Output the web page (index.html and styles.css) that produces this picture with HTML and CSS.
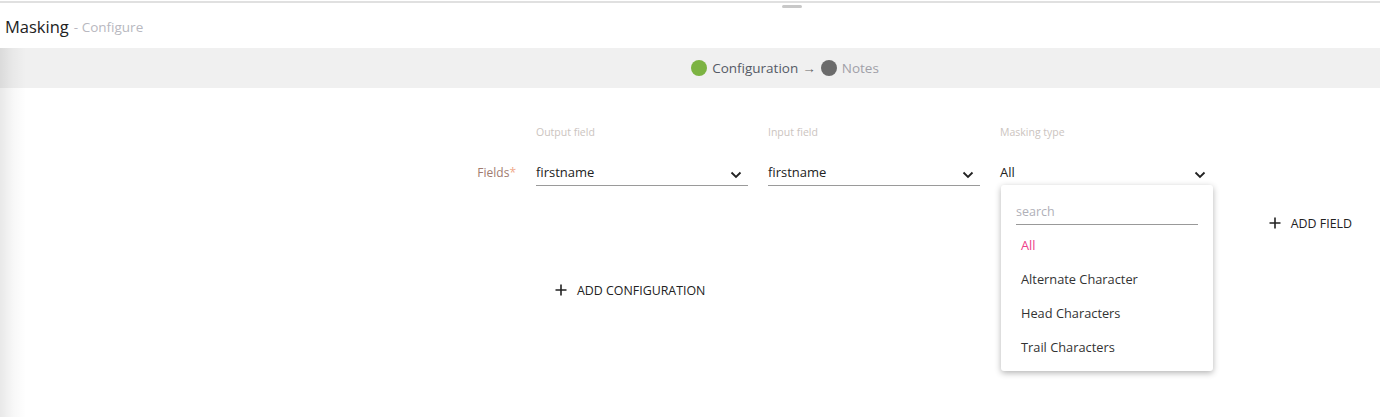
FILE: index.html
```html
<!DOCTYPE html>
<html>
<head>
<meta charset="utf-8">
<link rel="stylesheet" href="styles.css">
</head>
<body>
<div class="panel">
  <div class="topline"></div>
  <div class="handle"></div>
  <header class="title-bar">
    <span class="title">Masking</span>
    <span class="subtitle">- Configure</span>
  </header>
  <div class="stepper">
    <span class="dot dot-done"></span>
    <span class="step step-active">Configuration</span>
    <span class="arrow">→</span>
    <span class="dot dot-todo"></span>
    <span class="step step-todo">Notes</span>
  </div>
  <main class="form">
    <div class="grid">
      <div></div>
      <div class="col-head">Output field</div>
      <div class="col-head">Input field</div>
      <div class="col-head">Masking type</div>
      <div></div>

      <div class="row-label">Fields<span class="req">*</span></div>
      <div class="select"><span>firstname</span><svg class="chev" viewBox="0 0 12 8"><path d="M1.5 1.5 L6 6 L10.5 1.5" /></svg></div>
      <div class="select"><span>firstname</span><svg class="chev" viewBox="0 0 12 8"><path d="M1.5 1.5 L6 6 L10.5 1.5" /></svg></div>
      <div class="select select-open"><span>All</span><svg class="chev" viewBox="0 0 12 8"><path d="M1.5 1.5 L6 6 L10.5 1.5" /></svg>
        <div class="menu">
          <div class="search">search</div>
          <div class="opt opt-selected">All</div>
          <div class="opt">Alternate Character</div>
          <div class="opt">Head Characters</div>
          <div class="opt">Trail Characters</div>
        </div>
      </div>
      <div></div>

      <div></div><div></div><div></div><div></div>
      <div class="add-field-cell"><button class="btn"><svg class="plus" viewBox="0 0 12 12"><path d="M6 0.5 V11.5 M0.5 6 H11.5" /></svg>ADD FIELD</button></div>

      <div></div>
      <div class="add-config-cell"><button class="btn"><svg class="plus" viewBox="0 0 12 12"><path d="M6 0.5 V11.5 M0.5 6 H11.5" /></svg>ADD CONFIGURATION</button></div>
    </div>
  </main>
  <div class="edge-shadow"></div>
</div>
</body>
</html>
```

FILE: styles.css
```css
* { box-sizing: border-box; }
html, body { margin: 0; padding: 0; background: #fff; }
body {
  font-family: "Open Sans", "Noto Sans", sans-serif;
  color: #333;
  width: 1380px;
  height: 417px;
  overflow: hidden;
}
.panel {
  position: relative;
  height: 417px;
  padding-top: 1px;
}
.topline {
  height: 2px;
  background: #e0e0e0;
}
.handle {
  position: absolute;
  top: 5px;
  left: 782px;
  width: 20px;
  height: 3px;
  border-radius: 2px;
  background: #c8c8c8;
}
.title-bar {
  height: 45px;
  display: flex;
  align-items: center;
  gap: 5px;
  padding-left: 5px;
  padding-top: 1px;
}
.title {
  font-size: 16.5px;
  color: #222;
}
.subtitle {
  font-size: 13.5px;
  color: #b8b8c0;
  padding-top: 2px;
}
.stepper {
  height: 40px;
  background: #f0f0f0;
  display: flex;
  align-items: center;
  justify-content: center;
  padding-left: 190px;
  gap: 5px;
  font-size: 13.5px;
}
.dot {
  width: 16px;
  height: 16px;
  border-radius: 50%;
  display: inline-block;
}
.dot-done { background: #7cb342; }
.dot-todo { background: #6b6b6b; }
.step-active { color: #555a66; }
.step-todo { color: #a0a0a8; }
.arrow { color: #666; margin-left: -1px; }

.form { padding-top: 37px; }
.grid {
  display: grid;
  grid-template-columns: 516px 212px 212px 212px 1fr;
  column-gap: 20px;
  align-items: end;
}
.col-head {
  font-size: 10.5px;
  color: #cbc4c0;
  line-height: 14px;
  height: 16px;
}
.row-label {
  text-align: right;
  font-size: 12px;
  color: #a07b70;
  padding-bottom: 5px;
  margin-right: 0;
}
.req { color: #f0a888; }
.select {
  position: relative;
  margin-top: 20px;
  height: 25px;
  border-bottom: 1px solid #9a9a9a;
  display: flex;
  align-items: center;
  justify-content: space-between;
  font-size: 13px;
  color: #222;
  padding-bottom: 3px;
}
.select-open { border-bottom-color: transparent; }
.chev {
  width: 12px;
  height: 8px;
  margin-right: 6px;
  margin-top: 7px;
  fill: none;
  stroke: #222;
  stroke-width: 1.8;
}
.menu {
  position: absolute;
  top: 24px;
  left: 1px;
  width: 212px;
  height: 186px;
  background: #fff;
  border-radius: 3px;
  box-shadow: 0 2px 6px rgba(0,0,0,0.3);
  padding: 19px 15px 0 15px;
  z-index: 2;
}
.search {
  font-size: 12.5px;
  color: #b0b0b8;
  border-bottom: 1px solid #999;
  height: 21px;
  line-height: 16px;
}
.opt {
  font-size: 12.8px;
  color: #333;
  height: 34px;
  line-height: 34px;
  padding-left: 5px;
}
.search + .opt { margin-top: 3px; }
.opt-selected { color: #ee4088; }

.btn {
  font-family: "Open Sans", "Noto Sans", sans-serif;
  font-size: 12.4px;
  font-weight: 500;
  color: #222;
  background: none;
  border: 0;
  padding: 0;
  display: inline-flex;
  align-items: center;
  cursor: pointer;
}
.plus {
  width: 12px;
  height: 12px;
  margin-right: 10px;
  fill: none;
  stroke: #222;
  stroke-width: 1.6;
}
.add-field-cell {
  grid-column: 5;
  text-align: right;
  padding-right: 28px;
  padding-top: 26px;
  height: 46px;
}
.add-config-cell {
  grid-column: 2 / 4;
  padding-left: 19px;
  padding-top: 47px;
}
.edge-shadow {
  position: absolute;
  top: 48px;
  left: 0;
  bottom: 0;
  width: 26px;
  background: linear-gradient(to right, rgba(0,0,0,0.09), rgba(0,0,0,0.03) 50%, rgba(0,0,0,0));
  pointer-events: none;
}
```
